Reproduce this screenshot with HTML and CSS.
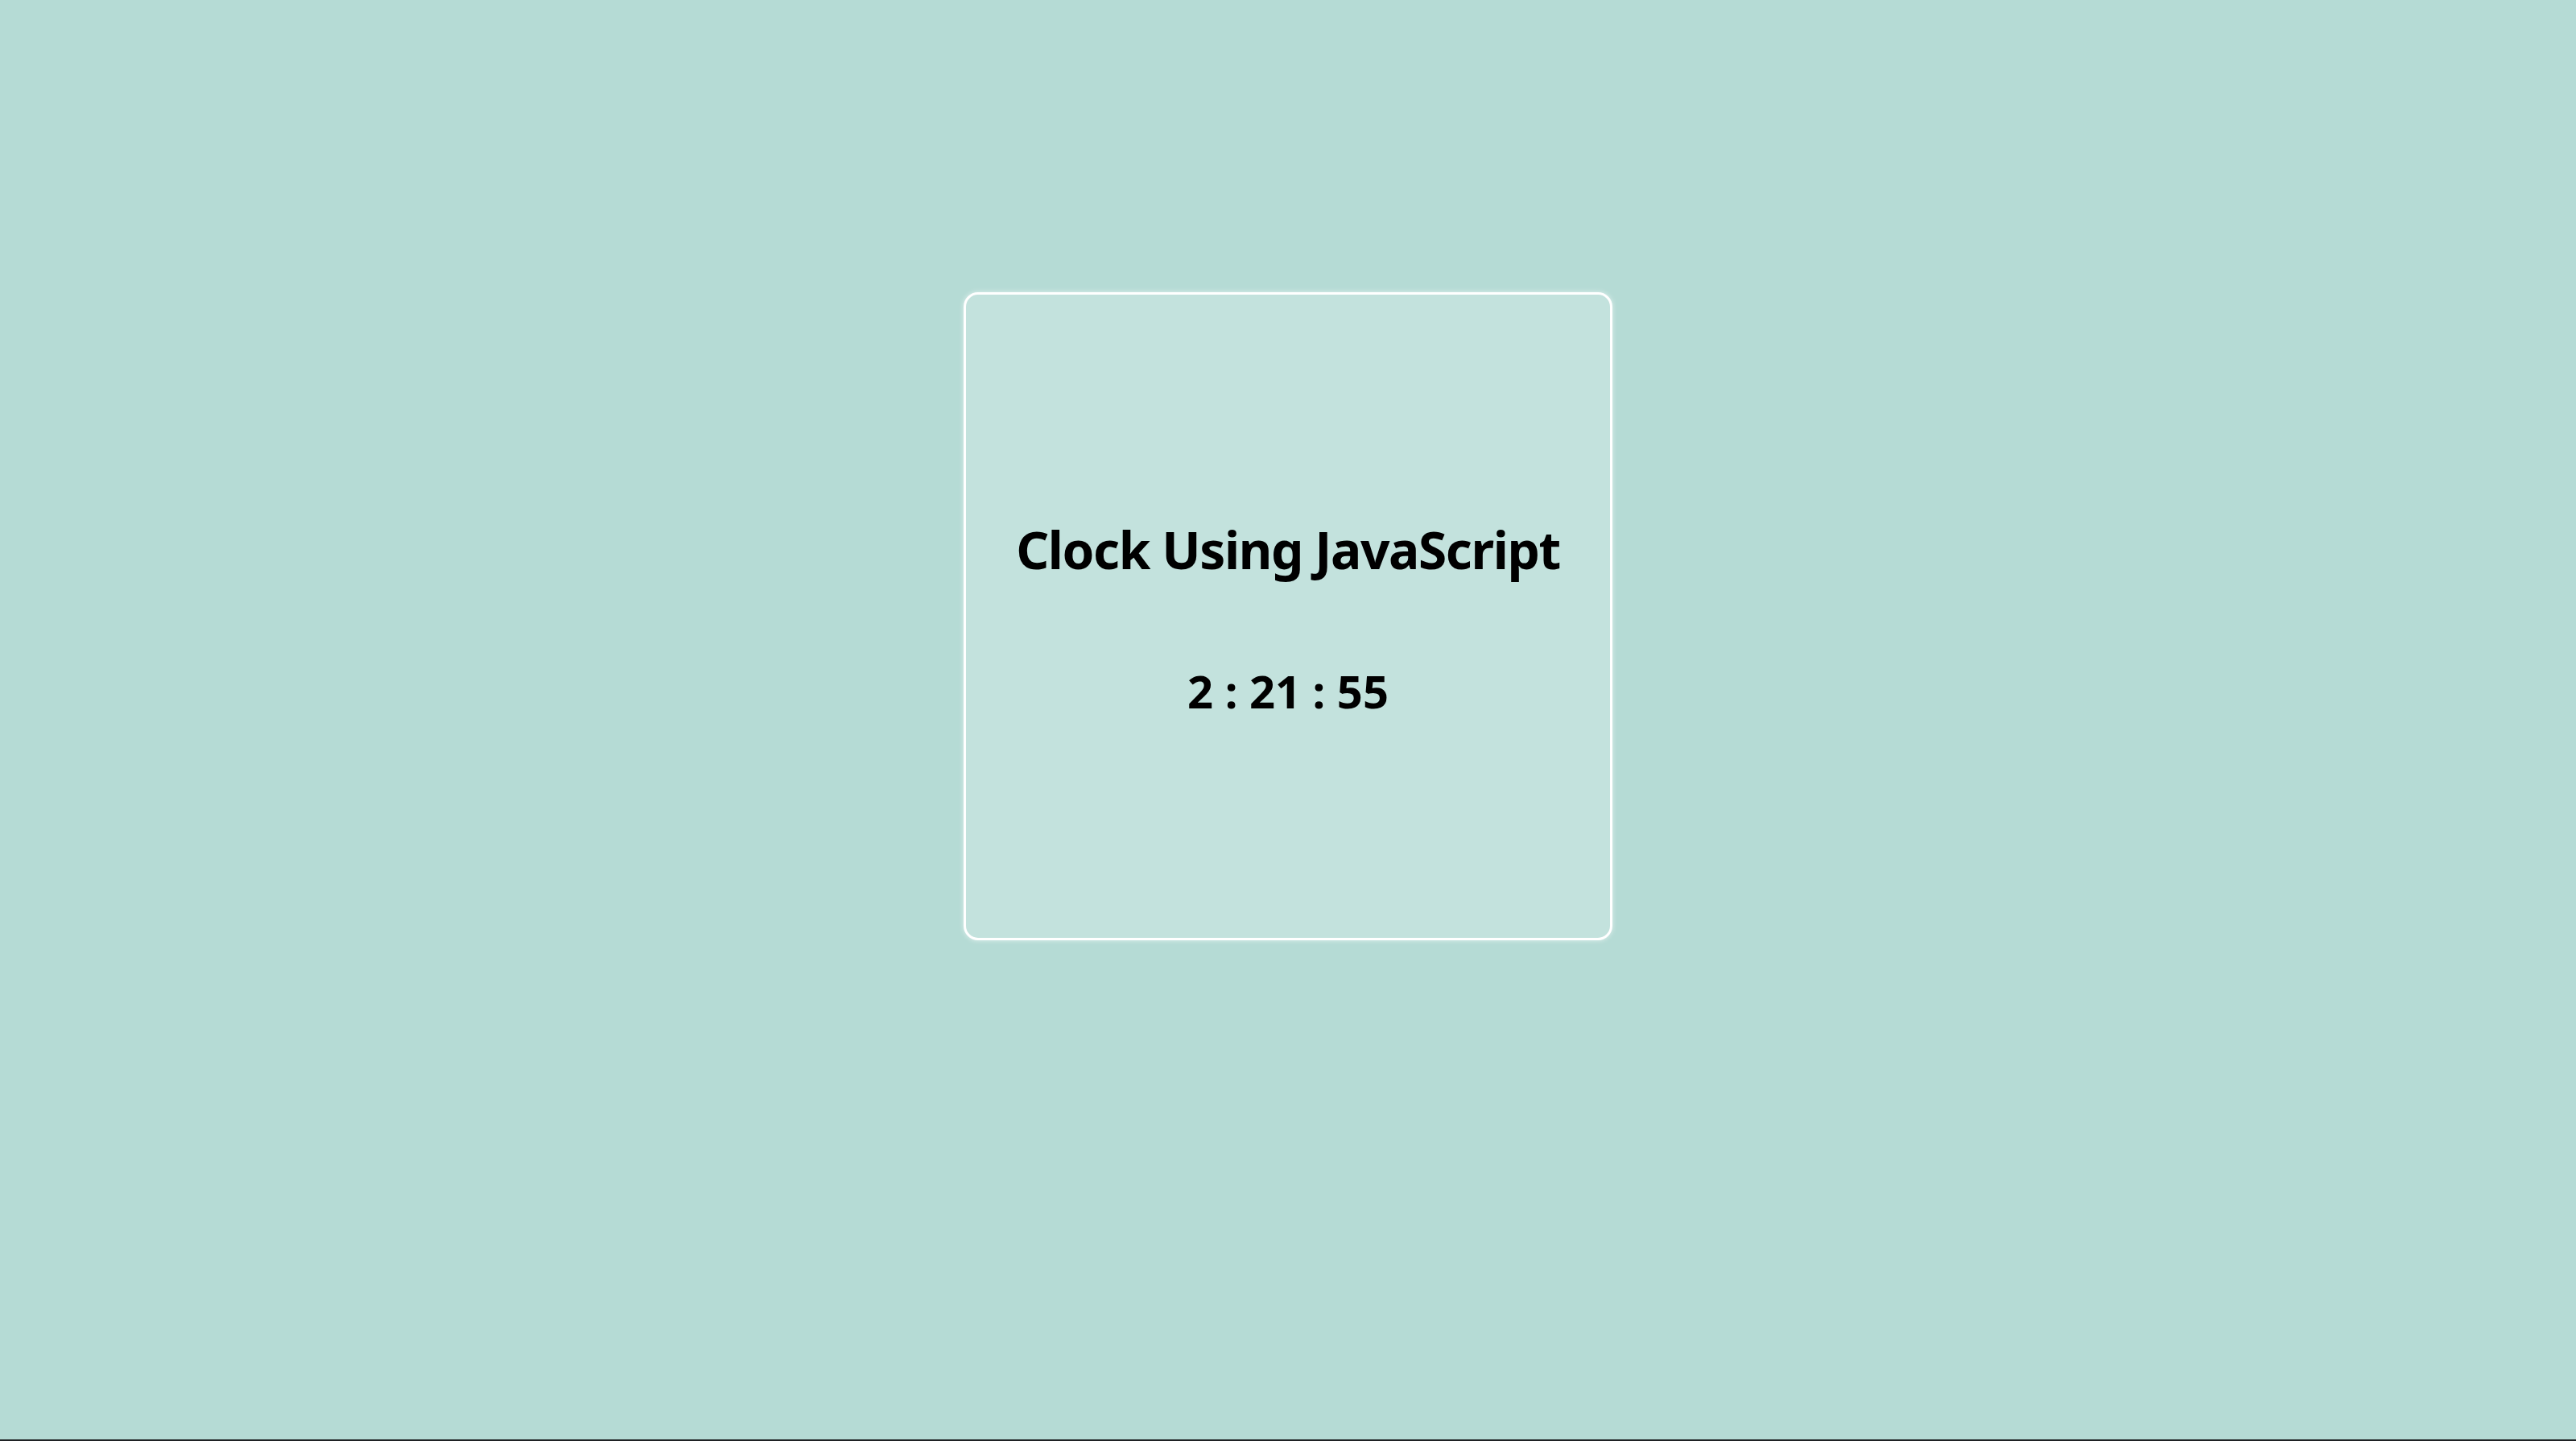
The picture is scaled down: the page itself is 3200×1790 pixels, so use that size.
FILE: index.html
```html
<!DOCTYPE html>
<html lang="en">
<head>
<meta charset="utf-8">
<title>Clock Using JavaScript</title>
<link rel="stylesheet" href="styles.css">
</head>
<body>
<main class="page">
  <section class="card">
    <h1 class="title">Clock Using JavaScript</h1>
    <div class="time">2 : 21 : 55</div>
  </section>
</main>
</body>
</html>
```
FILE: styles.css
```css
html, body {
  margin: 0;
  padding: 0;
}
body {
  background: #1f2224;
  font-family: "Noto Sans", "Open Sans", sans-serif;
  color: #000;
}
.page {
  height: 1788px;
  background: #b5dbd5;
  display: flex;
  justify-content: center;
  align-items: flex-start;
  padding-top: 363px;
  box-sizing: border-box;
}
.card {
  width: 800px;
  height: 793px;
  box-sizing: content-box;
  border: 3px solid #ffffff;
  border-radius: 18px;
  background: #c3e2dd;
  box-shadow: 0 0 6px rgba(255,255,255,0.6);
  display: flex;
  flex-direction: column;
  align-items: center;
  justify-content: center;
  gap: 115px;
  padding-top: 6px;
}
.title {
  margin: 0;
  font-size: 64px;
  font-weight: 700;
  line-height: 1;
  letter-spacing: -1.4px;
}
.time {
  font-size: 56px;
  font-weight: 700;
  line-height: 1;
}
```
